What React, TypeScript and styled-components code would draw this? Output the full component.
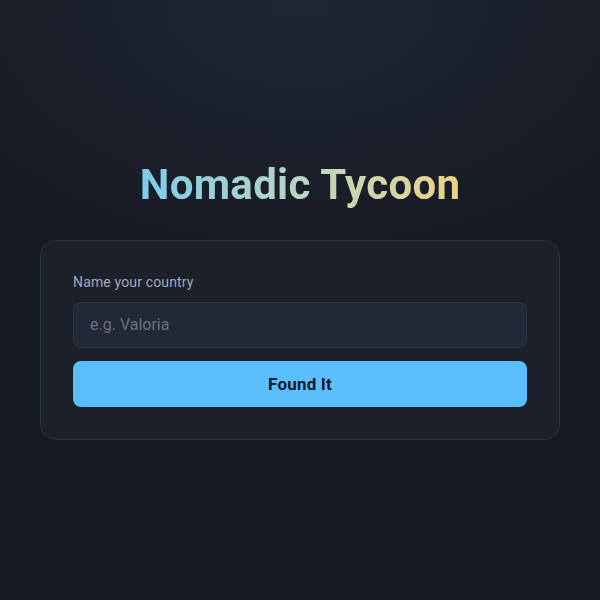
import React from 'react';
import styled, { createGlobalStyle } from 'styled-components';

const GlobalStyle = createGlobalStyle`
  html, body, #root {
    margin: 0;
    height: 100%;
  }
  body {
    font-family: Roboto, "Noto Sans", sans-serif;
    background: radial-gradient(ellipse 70% 45% at 50% 0%, #1f2533 0%, #1b202c 55%, #151a24 100%);
    background-color: #151a24;
  }
`;

const Page = styled.main`
  height: 100%;
  display: flex;
  flex-direction: column;
  align-items: center;
  justify-content: center;
  padding: 0 40px;
  box-sizing: border-box;
`;

const Title = styled.h1`
  margin: 0 0 29px;
  font-size: 42px;
  font-weight: 700;
  line-height: 1.2;
  letter-spacing: 0.3px;
  background: linear-gradient(90deg, #7ecbea 0%, #b9d6c4 50%, #ecd486 100%);
  -webkit-background-clip: text;
  background-clip: text;
  color: transparent;
`;

const Card = styled.form`
  width: 100%;
  max-width: 520px;
  box-sizing: border-box;
  padding: 32px;
  background: #1c202b;
  border: 1px solid #2b313e;
  border-radius: 16px;
  display: flex;
  flex-direction: column;
`;

const Label = styled.label`
  font-size: 14px;
  line-height: 18px;
  letter-spacing: 0.15px;
  color: #a3a9b6;
  margin-bottom: 11px;
`;

const Input = styled.input`
  height: 46px;
  box-sizing: border-box;
  padding: 0 16px;
  font-family: inherit;
  font-size: 16px;
  color: #e5e7eb;
  background: #222836;
  border: 1px solid #2c3241;
  border-radius: 8px;
  outline: none;
  margin-bottom: 13px;

  &::placeholder {
    color: #6b7180;
  }
`;

const Button = styled.button`
  height: 46px;
  border: none;
  border-radius: 8px;
  background: #5cbffd;
  color: #0f1828;
  font-family: inherit;
  font-size: 17px;
  font-weight: 700;
  letter-spacing: 0.2px;
  cursor: pointer;
`;

export default function App() {
  return (
    <>
      <GlobalStyle />
      <Page>
        <Title>Nomadic Tycoon</Title>
        <Card onSubmit={(e) => e.preventDefault()}>
          <Label htmlFor="country">Name your country</Label>
          <Input id="country" placeholder="e.g. Valoria" />
          <Button type="submit">Found It</Button>
        </Card>
      </Page>
    </>
  );
}
